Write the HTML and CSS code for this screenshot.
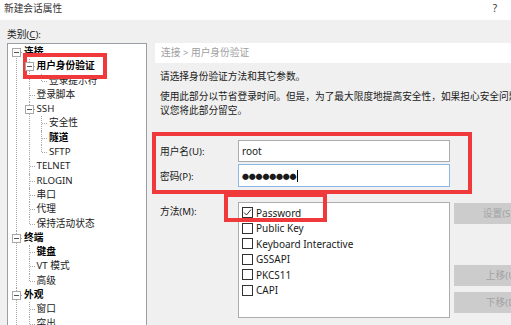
FILE: index.html
```html
<!DOCTYPE html>
<html lang="zh-CN">
<head>
  <meta charset="UTF-8" />
  <title>新建会话属性</title>
  <link rel="stylesheet" href="styles.css">
</head>
<body>
  <div class="titlebar">
    <span>新建会话属性</span>
    <span class="help">?</span>
  </div>

  <div class="dialog">
    <div class="side">
      <div class="cat-label">类别(<u>C</u>):</div>
      <div class="tree">
        <ul>
          <li>
            <div class="node b"><span class="toggle"></span>连接</div>
            <ul>
              <li>
                <div class="node b"><span class="toggle"></span>用户身份验证</div>
                <ul>
                  <li><div class="node">登录提示符</div></li>
                </ul>
              </li>
              <li><div class="node">登录脚本</div></li>
              <li>
                <div class="node"><span class="toggle"></span>SSH</div>
                <ul>
                  <li><div class="node">安全性</div></li>
                  <li><div class="node b">隧道</div></li>
                  <li><div class="node">SFTP</div></li>
                </ul>
              </li>
              <li><div class="node">TELNET</div></li>
              <li><div class="node">RLOGIN</div></li>
              <li><div class="node">串口</div></li>
              <li><div class="node">代理</div></li>
              <li><div class="node">保持活动状态</div></li>
            </ul>
          </li>
          <li>
            <div class="node b"><span class="toggle"></span>终端</div>
            <ul>
              <li><div class="node b">键盘</div></li>
              <li><div class="node">VT 模式</div></li>
              <li><div class="node">高级</div></li>
            </ul>
          </li>
          <li class="more">
            <div class="node b"><span class="toggle"></span>外观</div>
            <ul>
              <li><div class="node">窗口</div></li>
              <li><div class="node">突出</div></li>
            </ul>
          </li>
        </ul>
      </div>
    </div>

    <div class="main">
      <div class="crumb">连接 &gt; 用户身份验证</div>
      <p class="intro">请选择身份验证方法和其它参数。</p>
      <p class="note">使用此部分以节省登录时间。但是，为了最大限度地提高安全性，如果担心安全问题，建<br>议您将此部分留空。</p>

      <div class="login">
        <div class="field">
          <label>用户名(U):</label>
          <div class="input">root</div>
        </div>
        <div class="field">
          <label>密码(P):</label>
          <div class="input focus"><span class="dots">●●●●●●●●</span><span class="caret"></span></div>
        </div>
      </div>

      <div class="method">
        <label>方法(M):</label>
        <div class="list">
          <div class="item"><span class="check on"><svg viewBox="0 0 11 11" width="11" height="11"><polyline points="2,5.5 4.5,8 9,2.5" fill="none" stroke="#333" stroke-width="1"/></svg></span>Password</div>
          <div class="item"><span class="check"></span>Public Key</div>
          <div class="item"><span class="check"></span>Keyboard Interactive</div>
          <div class="item"><span class="check"></span>GSSAPI</div>
          <div class="item"><span class="check"></span>PKCS11</div>
          <div class="item"><span class="check"></span>CAPI</div>
        </div>
        <div class="buttons">
          <div class="btn">设置(S)...</div>
          <div class="btn move">上移(U)</div>
          <div class="btn">下移(D)</div>
        </div>
      </div>
    </div>
  </div>

  <!-- red annotation boxes -->
  <div class="mark mark-tree"></div>
  <div class="mark mark-login"></div>
  <div class="mark mark-pass"></div>
</body>
</html>
```

FILE: styles.css
```css
body {
  margin: 0;
  background-color: #f0f0f0;
  font-family: "Noto Sans", "Noto Sans CJK SC", sans-serif;
  font-size: 9.7px;
  color: #1a1a1a;
  overflow: hidden;
  width: 511px;
  height: 325px;
  position: relative;
}

.titlebar {
  height: 20px;
  background-color: #fff;
  display: flex;
  justify-content: space-between;
  align-items: center;
  padding: 0 14px 4px 4px;
  box-sizing: border-box;
  color: #333;
}

.help {
  font-size: 10px;
}

.dialog {
  display: flex;
  padding-left: 7px;
}

.side {
  width: 140px;
  flex-shrink: 0;
}

.cat-label {
  margin-top: 8px;
  margin-bottom: 1px;
  line-height: 14px;
  color: #222;
}

/* tree */
.tree {
  background-color: #fff;
  border: 1px solid #9a9fa6;
  border-bottom: none;
  height: 282px;
  padding-top: 1px;
  box-sizing: border-box;
  overflow: hidden;
}

.tree ul {
  list-style: none;
  margin: 0;
  padding: 0;
}

.tree ul ul {
  padding-left: 12.5px;
}

.tree li {
  position: relative;
}

.tree li::before {
  content: "";
  position: absolute;
  left: 8px;
  top: 0;
  bottom: 0;
  border-left: 1px dotted #a8a8a8;
}

.tree li:last-child::before {
  bottom: auto;
  height: 7px;
}

.tree li.more::before {
  height: auto;
  bottom: 0;
}

.tree > ul > li:first-child::before {
  top: 7px;
}

.node {
  position: relative;
  height: 14.3px;
  line-height: 14.3px;
  padding-left: 16px;
  white-space: nowrap;
  color: #222;
}

.node::before {
  content: "";
  position: absolute;
  left: 9px;
  top: 7px;
  width: 5px;
  border-top: 1px dotted #a8a8a8;
}

.node.b {
  font-weight: bold;
  color: #000;
}

.toggle {
  position: absolute;
  left: 4px;
  top: 3px;
  width: 7px;
  height: 7px;
  border: 1px solid #a8a8a8;
  background-color: #fff;
  z-index: 1;
}

.toggle::after {
  content: "";
  position: absolute;
  left: 1px;
  right: 1px;
  top: 3px;
  border-top: 1px solid #555;
}

/* right side */
.main {
  margin-left: 8px;
  flex: 1;
  white-space: nowrap;
}

.crumb {
  margin-top: 23px;
  height: 20px;
  line-height: 20px;
  background-color: #fff;
  color: #a0a0a0;
  padding-left: 6px;
}

.intro {
  margin: 7px 0 0;
  padding-left: 5px;
  line-height: 14px;
}

.note {
  margin: 6px 0 0;
  padding-left: 5px;
  line-height: 14px;
  overflow: hidden;
}

.login {
  margin-top: 22px;
}

.field {
  display: flex;
  align-items: center;
  margin-bottom: 2px;
}

.field label,
.method label {
  width: 83px;
  padding-left: 5px;
  box-sizing: border-box;
  flex-shrink: 0;
}

.input {
  width: 212px;
  height: 22px;
  box-sizing: border-box;
  background-color: #fff;
  border: 1px solid #acacac;
  padding-left: 3px;
  display: flex;
  align-items: center;
  font-size: 10px;
}

.input.focus {
  height: 23px;
  border-color: #8ab9e8;
}

.dots {
  font-size: 7px;
  letter-spacing: -0.2px;
}

.caret {
  display: inline-block;
  width: 1px;
  height: 12px;
  background-color: #000;
  margin-left: 1px;
}

.method {
  display: flex;
  margin-top: 15px;
}

.method label {
  padding-top: 3px;
  line-height: 14px;
}

.list {
  width: 212px;
  height: 116px;
  box-sizing: border-box;
  background-color: #fff;
  border: 1px solid #acacac;
  padding-top: 2px;
}

.item {
  height: 15.5px;
  display: flex;
  align-items: center;
  padding-left: 3px;
  font-size: 10px;
}

.check {
  width: 11px;
  height: 11px;
  box-sizing: border-box;
  border: 1px solid #333;
  margin-right: 3px;
  background-color: #fff;
  display: flex;
}

.check svg {
  margin: -1px;
}

.buttons {
  margin-left: 4px;
  padding-top: 1px;
  overflow: hidden;
  width: 57px;
}

.btn {
  width: 96px;
  height: 21px;
  line-height: 21px;
  text-align: center;
  background-color: #cccccc;
  color: #a3a3a3;
  margin-bottom: 6px;
}

.btn.move {
  margin-top: 41px;
}

/* annotation overlays */
.mark {
  position: absolute;
  border: 4.5px solid #f0393b;
  box-sizing: border-box;
}

.mark-tree {
  left: 23px;
  top: 53px;
  width: 84px;
  height: 26px;
}

.mark-login {
  left: 152px;
  top: 132px;
  width: 320px;
  height: 62px;
}

.mark-pass {
  left: 224px;
  top: 193px;
  width: 103px;
  height: 29px;
}
```
